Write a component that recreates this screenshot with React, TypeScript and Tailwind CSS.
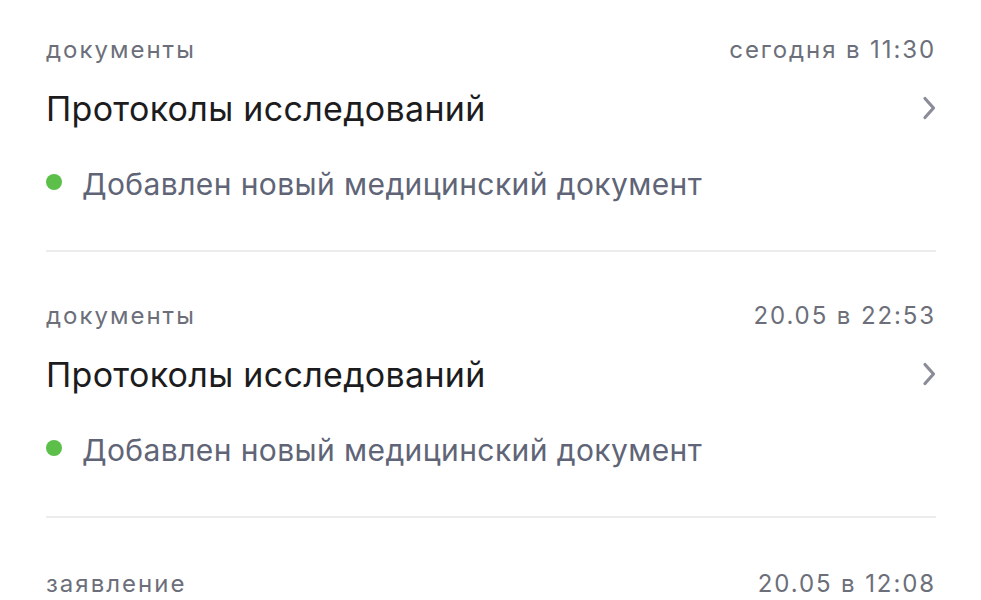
const items = [
  { kind: 'документы', date: 'сегодня в 11:30', title: 'Протоколы исследований', status: 'Добавлен новый медицинский документ' },
  { kind: 'документы', date: '20.05 в 22:53', title: 'Протоколы исследований', status: 'Добавлен новый медицинский документ' },
];

function Chevron() {
  return (
    <svg width="14" height="24" viewBox="0 0 14 24" fill="none" className="shrink-0">
      <path d="M3 2.5 L11.5 12 L3 21.5" stroke="#8a8d99" strokeWidth="3.2" strokeLinecap="round" strokeLinejoin="round" />
    </svg>
  );
}

function Header({ kind, date }: { kind: string; date: string }) {
  return (
    <div className="flex items-center justify-between h-[28px] text-[24px] text-[#6c6f7a]">
      <span className="tracking-[2px]">{kind}</span>
      <span className="tracking-[1.9px]">{date}</span>
    </div>
  );
}

export default function App() {
  return (
    <div
      className="w-[981px] h-[600px] overflow-hidden bg-white pl-[46px] pr-[45px]"
      style={{ fontFamily: 'Inter, Roboto, "Noto Sans", sans-serif' }}
    >
      {items.map((it, i) => (
        <div key={i} className={i === 0 ? 'pt-[36px]' : 'pt-[50px]'}>
          <Header kind={it.kind} date={it.date} />
          <div className="mt-[24px] flex items-center justify-between h-[40px]">
            <span className="text-[34px] text-[#1c1c1e] tracking-[0.3px]">{it.title}</span>
            <Chevron />
          </div>
          <div className="mt-[38px] flex items-center h-[36px] gap-[20px]">
            <span className="w-[16px] h-[16px] rounded-full bg-[#5cbf4a] shrink-0 -mt-[4px]" />
            <span className="text-[30px] text-[#5f6577] tracking-[0.4px]">{it.status}</span>
          </div>
          <div className="pb-[48px] border-b-2 border-[#ececec]" />
        </div>
      ))}
      <div className="pt-[52px]">
        <Header kind="заявление" date="20.05 в 12:08" />
      </div>
    </div>
  );
}
